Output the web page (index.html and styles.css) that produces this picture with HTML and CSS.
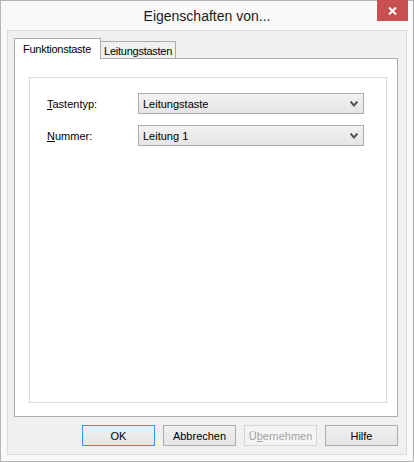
FILE: index.html
```html
<!DOCTYPE html>
<html lang="de">
<head>
    <meta charset="UTF-8">
    <meta name="viewport" content="width=device-width, initial-scale=1.0">
    <title>Eigenschaften von...</title>
    <link rel="stylesheet" href="styles.css">
</head>
<body>
    <div class="window">
        <div class="titlebar">
            <span class="title">Eigenschaften von...</span>
            <div class="close-btn">
                <svg width="9" height="8" viewBox="0 0 9 8">
                    <path d="M1 0.5 L8 7.5 M8 0.5 L1 7.5" stroke="#fff" stroke-width="2"/>
                </svg>
            </div>
        </div>
        <div class="frame">
            <div class="tabs">
                <div class="tab active">Funktionstaste</div>
                <div class="tab">Leitungstasten</div>
            </div>
            <div class="tab-panel">
                <div class="group">
                    <div class="row">
                        <label class="label"><u>T</u>astentyp:</label>
                        <div class="combo">
                            <span>Leitungstaste</span>
                            <svg width="8" height="6" viewBox="0 0 8 6">
                                <path d="M0.5 0.5 L4 4.5 L7.5 0.5" fill="none" stroke="#555" stroke-width="2"/>
                            </svg>
                        </div>
                    </div>
                    <div class="row">
                        <label class="label"><u>N</u>ummer:</label>
                        <div class="combo">
                            <span>Leitung 1</span>
                            <svg width="8" height="6" viewBox="0 0 8 6">
                                <path d="M0.5 0.5 L4 4.5 L7.5 0.5" fill="none" stroke="#555" stroke-width="2"/>
                            </svg>
                        </div>
                    </div>
                </div>
            </div>
            <div class="buttons">
                <button class="btn default">OK</button>
                <button class="btn">Abbrechen</button>
                <button class="btn" disabled>Ü<u>b</u>ernehmen</button>
                <button class="btn">Hilfe</button>
            </div>
        </div>
    </div>
</body>
</html>
```

FILE: styles.css
```css
html, body {
    margin: 0;
    padding: 0;
    background: #fff;
    font-family: "Liberation Sans", Arial, sans-serif;
    font-size: 11px;
    color: #000;
}
.window {
    width: 414px;
    height: 462px;
    box-sizing: border-box;
    border: 1px solid #b5b5b5;
    background: #f9f9f9;
    display: flex;
    flex-direction: column;
}
.titlebar {
    height: 29px;
    position: relative;
    display: flex;
    justify-content: center;
    align-items: center;
}
.title {
    font-size: 14px;
    color: #1b1b1b;
    margin-top: 1px;
}
.close-btn {
    position: absolute;
    top: -1px;
    right: 5px;
    width: 31px;
    height: 21px;
    background: #c75050;
    display: flex;
    justify-content: center;
    align-items: center;
}
.frame {
    flex: 1;
    margin: 0 6px 6px 6px;
    border: 1px solid #dadada;
    background: #f0f0f0;
    padding: 7px 8px 8px 6px;
    display: flex;
    flex-direction: column;
}
.tabs {
    display: flex;
    align-items: flex-end;
    height: 20px;
    position: relative;
    z-index: 1;
}
.tab {
    height: 17px;
    box-sizing: border-box;
    padding: 1px 3px 0 3px;
    border: 1px solid #acacac;
    border-bottom: none;
    background: #f0f0f0;
    line-height: 16px;
    letter-spacing: -0.25px;
}
.tab + .tab {
    border-left: none;
}
.tab.active {
    height: 21px;
    margin-bottom: -1px;
    background: #fff;
    padding: 2px 9px 0 8px;
}
.tab-panel {
    flex: 1;
    border: 1px solid #acacac;
    background: #fff;
    padding: 18px 10px 13px 14px;
    display: flex;
}
.group {
    flex: 1;
    border: 1px solid #dcdcdc;
    padding: 15px 22px 0 17px;
    display: flex;
    flex-direction: column;
    gap: 11px;
}
.row {
    display: flex;
    align-items: center;
    height: 21px;
}
.label {
    width: 91px;
    flex: none;
}
.combo {
    width: 226px;
    height: 21px;
    box-sizing: border-box;
    border: 1px solid #acacac;
    background: linear-gradient(#f2f2f2, #e5e5e5);
    display: flex;
    align-items: center;
    justify-content: space-between;
    padding: 0 5px 0 4px;
}
.combo svg {
    margin-top: 1px;
}
.buttons {
    display: flex;
    justify-content: flex-end;
    gap: 8px;
    margin-top: 8px;
}
.btn {
    width: 73px;
    height: 21px;
    box-sizing: border-box;
    border: 1px solid #acacac;
    background: linear-gradient(#f0f0f0, #e5e5e5);
    font-family: "Liberation Sans", Arial, sans-serif;
    font-size: 11px;
    color: #000;
    padding: 0;
    margin: 0;
}
.btn.default {
    border-color: #3399ff;
}
.btn:disabled {
    border-color: #d5d5d5;
    background: #f4f4f4;
    color: #a3a3a3;
}
```
